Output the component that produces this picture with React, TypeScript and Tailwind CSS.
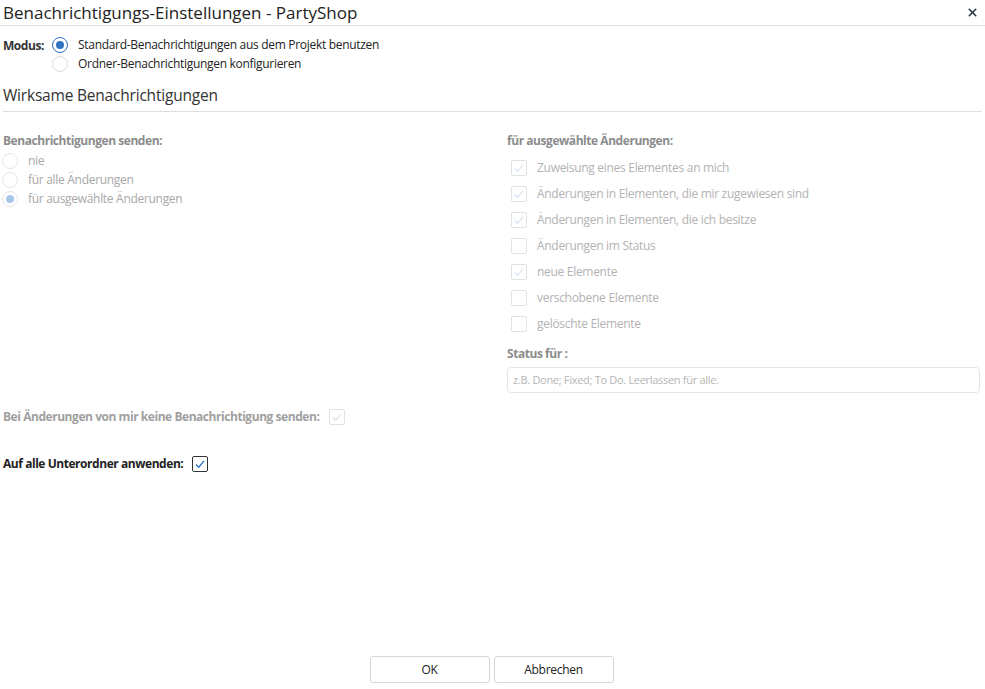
import { X } from "lucide-react";

const Radio = ({ checked, disabled }: { checked?: boolean; disabled?: boolean }) => (
  <span
    className={`flex items-center justify-center w-[16px] h-[16px] rounded-full border bg-white ${
      disabled ? "border-[#e6e6e6]" : checked ? "border-[#2f6fbf]" : "border-[#dadada]"
    }`}
  >
    {checked && (
      <span className={`w-[8px] h-[8px] rounded-full ${disabled ? "bg-[#a9c6e8]" : "bg-[#2f72c2]"}`}></span>
    )}
  </span>
);

const Check = ({ checked, dark }: { checked?: boolean; dark?: boolean }) => (
  <span
    className={`flex items-center justify-center w-[16px] h-[16px] rounded-[2px] border bg-white ${
      dark ? "border-[#333]" : "border-[#e2e2e2]"
    }`}
  >
    {checked && (
      <svg width="12" height="12" viewBox="0 0 12 12" fill="none">
        <path
          d="M2 6.5 L4.8 9.2 L10 2.8"
          stroke={dark ? "#2f72c2" : "#dbe6f3"}
          strokeWidth="1.3"
        />
      </svg>
    )}
  </span>
);

const changes = [
  { label: "Zuweisung eines Elementes an mich", checked: true },
  { label: "Änderungen in Elementen, die mir zugewiesen sind", checked: true },
  { label: "Änderungen in Elementen, die ich besitze", checked: true },
  { label: "Änderungen im Status", checked: false },
  { label: "neue Elemente", checked: true },
  { label: "verschobene Elemente", checked: false },
  { label: "gelöschte Elemente", checked: false },
];

export default function App() {
  return (
    <div
      className="h-[689px] w-[985px] bg-white flex flex-col text-[12px] tracking-[-0.3px] text-[#333]"
      style={{ fontFamily: '"Open Sans", "Noto Sans", sans-serif' }}
    >
      <div className="h-[26px] flex items-center justify-between border-b border-[#dedede] pl-[3px] pr-[6px]">
        <h1 className="text-[17px] leading-none tracking-normal text-[#222] -mt-[1px]">Benachrichtigungs-Einstellungen - PartyShop</h1>
        <X size={13} strokeWidth={3} className="text-[#2b3a4a]" />
      </div>

      <div className="flex flex-col px-[3px]">
        <div className="flex mt-[11px]">
          <span className="font-bold text-[#333] w-[49px] tracking-[-0.45px]">Modus:</span>
          <div className="flex flex-col gap-[3px]">
            <label className="flex items-center gap-[10px] h-[16px]">
              <Radio checked />
              <span className="text-[#222]">Standard-Benachrichtigungen aus dem Projekt benutzen</span>
            </label>
            <label className="flex items-center gap-[10px] h-[16px]">
              <Radio />
              <span className="text-[#222]">Ordner-Benachrichtigungen konfigurieren</span>
            </label>
          </div>
        </div>

        <div className="mt-[10px] h-[30px] flex items-center border-b border-[#dedede]">
          <h2 className="text-[15.5px] tracking-[-0.2px] text-[#333] -mt-[2px]">Wirksame Benachrichtigungen</h2>
        </div>

        <div className="flex mt-[20px]">
          <div className="w-[504px] flex flex-col">
            <span className="font-bold text-[#8c8c8c] h-[18px] leading-[18px] tracking-[-0.45px]">Benachrichtigungen senden:</span>
            <div className="flex flex-col gap-[3px] mt-[3px] -ml-[1px]">
              {[
                { l: "nie", c: false },
                { l: "für alle Änderungen", c: false },
                { l: "für ausgewählte Änderungen", c: true },
              ].map((r) => (
                <label key={r.l} className="flex items-center gap-[10px] h-[16px]">
                  <Radio checked={r.c} disabled />
                  <span className="text-[#a8a8a8]">{r.l}</span>
                </label>
              ))}
            </div>
          </div>

          <div className="flex-1 flex flex-col pr-[2px]">
            <span className="font-bold text-[#8c8c8c] h-[18px] leading-[18px] tracking-[-0.45px]">für ausgewählte Änderungen:</span>
            <div className="flex flex-col gap-[10px] mt-[10px] pl-[4px]">
              {changes.map((c) => (
                <label key={c.label} className="flex items-center gap-[10px] h-[16px]">
                  <Check checked={c.checked} />
                  <span className="text-[#b3b3b3]">{c.label}</span>
                </label>
              ))}
            </div>
            <span className="font-bold text-[#8c8c8c] h-[18px] leading-[18px] mt-[13px] tracking-[-0.45px]">Status für :</span>
            <div className="mt-[4px] h-[26px] border border-[#e4e4e4] rounded-[4px] flex items-center px-[5px]">
              <span className="text-[11px] text-[#b5b5b5]">z.B. Done; Fixed; To Do. Leerlassen für alle.</span>
            </div>
          </div>
        </div>

        <div className="flex items-center gap-[10px] mt-[15px] h-[18px]">
          <span className="font-bold text-[#a0a0a0] tracking-[-0.45px]">Bei Änderungen von mir keine Benachrichtigung senden:</span>
          <Check checked />
        </div>

        <div className="flex items-center gap-[9px] mt-[29px] h-[18px]">
          <span className="font-bold text-[#222] tracking-[-0.45px]">Auf alle Unterordner anwenden:</span>
          <Check checked dark />
        </div>
      </div>

      <div className="mt-auto mb-[6px] flex justify-center gap-[4px] -ml-[2px]">
        <button className="w-[120px] h-[27px] border border-[#d6d6d6] rounded-[3px] bg-white text-[#222]">OK</button>
        <button className="w-[120px] h-[27px] border border-[#d6d6d6] rounded-[3px] bg-white text-[#222]">Abbrechen</button>
      </div>
    </div>
  );
}
